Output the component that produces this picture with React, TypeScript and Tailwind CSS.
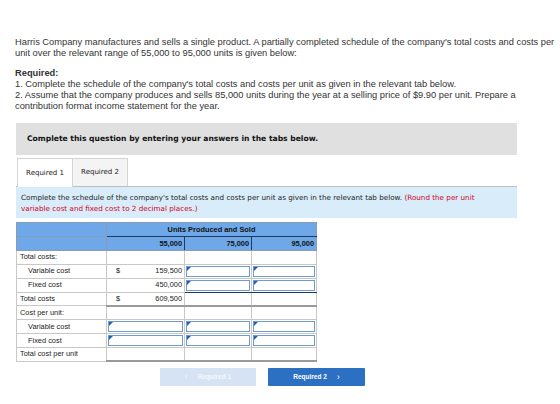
import React from "react";

const sans = { fontFamily: '"Liberation Sans", Arial, sans-serif' };
const verdana = { fontFamily: '"DejaVu Sans", Verdana, sans-serif' };

function InputBox() {
  return (
    <div className="relative h-full w-full border border-[#6f9bd2] bg-white">
      <span className="absolute left-0 top-0 block h-0 w-0 border-t-[4px] border-t-[#1f62b8] border-r-[4px] border-r-transparent" />
    </div>
  );
}

type Row = {
  label: string;
  indent?: boolean;
  dollar?: boolean;
  value?: string;
  c1Input?: boolean;
  c23Input?: boolean;
  bottom?: "thick" | "navy";
};

const rows: Row[] = [
  { label: "Total costs:" },
  { label: "Variable cost", indent: true, dollar: true, value: "159,500", c23Input: true },
  { label: "Fixed cost", indent: true, value: "450,000", c23Input: true, bottom: "navy" },
  { label: "Total costs", dollar: true, value: "609,500", bottom: "thick" },
  { label: "Cost per unit:" },
  { label: "Variable cost", indent: true, c1Input: true, c23Input: true },
  { label: "Fixed cost", indent: true, c1Input: true, c23Input: true },
  { label: "Total cost per unit", bottom: "thick" },
];

export default function App() {
  return (
    <div className="w-[560px] h-[404px] bg-white text-[#222] overflow-hidden">
      <div className="pl-[15px] pt-[37px]">
        <div className="text-[9.3px] leading-[11px] text-[#333] w-[545px]" style={sans}>
          <p>
            Harris Company manufactures and sells a single product. A partially completed schedule of the company's total costs and costs per unit over the relevant range of 55,000 to 95,000 units is given below:
          </p>
          <p className="mt-[9px] font-bold">Required:</p>
          <p>1. Complete the schedule of the company's total costs and costs per unit as given in the relevant tab below.</p>
          <p className="w-[510px]">
            2. Assume that the company produces and sells 85,000 units during the year at a selling price of $9.90 per unit. Prepare a contribution format income statement for the year.
          </p>
        </div>

        <div className="ml-px mt-[11px] w-[501px]">
          <div className="h-[32px] bg-[#e0e0e0] flex items-center pl-[11px] text-[7.6px] font-bold text-[#111]" style={verdana}>
            Complete this question by entering your answers in the tabs below.
          </div>
          <div className="mt-[3px] flex h-[29px] border-b border-[#bdbdbd] pl-px text-[7px] text-[#222]" style={verdana}>
            <div className="relative -mb-px flex w-[56px] items-center justify-center border border-b-0 border-[#d4d4d4] bg-white">Required 1</div>
            <div className="flex w-[55px] items-center justify-center border border-l-0 border-b-0 border-[#d4d4d4] bg-[#f4f4f4]">Required 2</div>
          </div>
          <div className="h-[31px] bg-[#d9ecfa] pl-[5px] pt-[5px] pr-[28px] text-[7.2px] leading-[11px] text-[#222]" style={verdana}>
            Complete the schedule of the company's total costs and costs per unit as given in the relevant tab below.{" "}
            <span className="text-[#d0021b]">(Round the per unit variable cost and fixed cost to 2 decimal places.)</span>
          </div>
        </div>

        <table className="ml-px mt-[4px] border-collapse text-[7.4px] text-[#222]" style={sans}>
          <colgroup>
            <col className="w-[90px]" />
            <col className="w-[78px]" />
            <col className="w-[67px]" />
            <col className="w-[65px]" />
          </colgroup>
          <thead>
            <tr className="h-[14px] bg-[#6fa8e8]">
              <th className="border border-[#8a9cb3] p-0"></th>
              <th colSpan={3} className="border border-[#8a9cb3] border-b-[#1f3a5f] p-0 text-center font-bold text-[#111]">
                Units Produced and Sold
              </th>
            </tr>
            <tr className="h-[14px] bg-[#6fa8e8]">
              <th className="border border-[#8a9cb3] p-0"></th>
              <th className="border border-[#8a9cb3] border-r-[#1f3a5f] p-0 pr-[2px] text-right font-bold text-[#111]">55,000</th>
              <th className="border border-[#8a9cb3] border-r-[#1f3a5f] p-0 pr-[2px] text-right font-bold text-[#111]">75,000</th>
              <th className="border border-[#8a9cb3] p-0 pr-[2px] text-right font-bold text-[#111]">95,000</th>
            </tr>
          </thead>
          <tbody>
            {rows.map((r, i) => {
              const bottom =
                r.bottom === "thick"
                  ? "border-b-[2px] border-b-[#9a9a9a]"
                  : r.bottom === "navy"
                  ? "border-b-[#1f3a5f]"
                  : "";
              return (
                <tr key={i} className="h-[13.7px]">
                  <td className={`border border-[#c8c8c8] p-0 leading-[12px] ${r.indent ? "pl-[11px]" : "pl-[3px]"}`}>
                    {r.label}
                  </td>
                  <td className={`border border-[#c8c8c8] p-0 ${r.bottom === "thick" ? "border-b-[2px] border-b-[#9a9a9a]" : ""}`}>
                    {r.c1Input ? (
                      <div className="h-[13px] p-px">
                        <InputBox />
                      </div>
                    ) : (
                      <div className="flex items-center justify-between pl-[9px] pr-[2px] leading-[12px]">
                        <span>{r.dollar ? "$" : ""}</span>
                        <span>{r.value ?? ""}</span>
                      </div>
                    )}
                  </td>
                  {[0, 1].map((k) => (
                    <td key={k} className={`border border-[#c8c8c8] p-0 ${bottom}`}>
                      {r.c23Input ? (
                        <div className="h-[13px] p-px">
                          <InputBox />
                        </div>
                      ) : null}
                    </td>
                  ))}
                </tr>
              );
            })}
          </tbody>
        </table>

        <div className="mt-[6px] flex gap-[12px] pl-[145px] text-[6.5px] font-bold text-white" style={sans}>
          <div className="flex h-[18px] w-[96px] items-center justify-center gap-[10px] rounded-[1px] bg-[#d5e3f4] text-[#f4f8fc]">
            <span className="text-[8px] font-normal">‹</span>
            <span>Required 1</span>
          </div>
          <div className="flex h-[18px] w-[97px] items-center justify-center gap-[10px] rounded-[1px] bg-[#2b70c2]">
            <span>Required 2</span>
            <span className="text-[9px] font-normal">›</span>
          </div>
        </div>
      </div>
    </div>
  );
}
